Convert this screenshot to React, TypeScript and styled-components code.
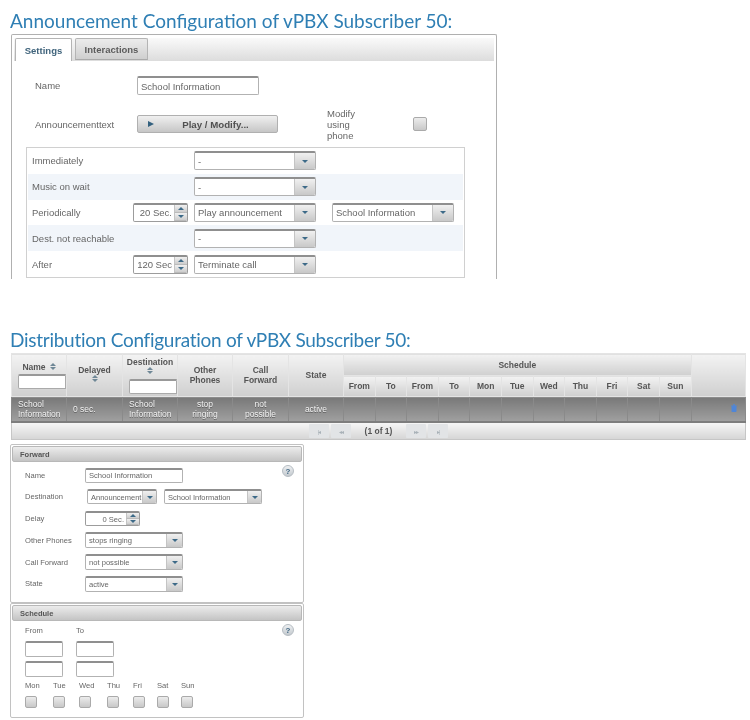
import React from 'react'
import styled, { createGlobalStyle } from 'styled-components'

const variables = {
  title: '#2f7fb4',
  text: '#666',
  strong: '#555'
}

const GlobalStyle = createGlobalStyle`
  body {
    margin: 0;
    background: #fff;
    font-family: "Liberation Sans", Arial, sans-serif;
    color: ${variables.text};
  }
`
const Page = styled.div`
  width: 750px;
  height: 720px;
  overflow: hidden;
  padding: 9px 0 0 10px;
  box-sizing: border-box;
  filter: blur(0.5px);
`
const Title = styled.h1<{ $top?: number; $spacing?: number }>`
  margin: ${p => p.$top ?? 0}px 0 0 0;
  height: 23px;
  line-height: 23px;
  font-family: Lato, sans-serif;
  font-size: 19px;
  font-weight: 400;
  letter-spacing: ${p => p.$spacing ?? 0}px;
  white-space: nowrap;
  color: ${variables.title};
`
const ConfigPanel = styled.section`
  width: 486px;
  height: 245px;
  margin: 2px 0 0 1px;
  padding: 3px 2px 0;
  box-sizing: border-box;
  border: 1px solid #b0b0b0;
  border-bottom: 0;
  border-radius: 2px 2px 0 0;
`
const TabBar = styled.div`
  display: flex;
  gap: 3px;
  height: 23px;
  padding-left: 1px;
  box-sizing: border-box;
  background: linear-gradient(#fafafa, #dcdcdc);
`
const Tab = styled.div<{ $active?: boolean }>`
  display: flex;
  align-items: center;
  justify-content: center;
  width: ${p => (p.$active ? 57 : 73)}px;
  height: ${p => (p.$active ? 23 : 22)}px;
  box-sizing: border-box;
  border: 1px solid #b4b4b4;
  border-bottom: ${p => (p.$active ? 0 : '1px solid #aaa')};
  border-radius: 2px 2px 0 0;
  background: ${p => (p.$active ? '#fff' : 'linear-gradient(#ececec, #cfcfcf)')};
  font-size: 9.5px;
  font-weight: 700;
  color: ${p => (p.$active ? '#40647c' : '#5c5c5c')};
`
const FormRow = styled.div<{ $height: number }>`
  display: flex;
  align-items: center;
  height: ${p => p.$height}px;
  padding-left: 21px;
  font-size: 9.5px;
`
const RowLabel = styled.span`
  width: 102px;
  flex: none;
`
const PhoneLabel = styled.span`
  width: 40px;
  margin: 0 46px 0 49px;
  line-height: 11px;
`
const TextInput = styled.div<{ $width: number; $height: number; $size?: number }>`
  display: flex;
  align-items: center;
  width: ${p => p.$width}px;
  height: ${p => p.$height}px;
  padding: 0 3px;
  box-sizing: border-box;
  flex: none;
  border: 1px solid #b2b2b2;
  border-top: 2px solid #8f8f8f;
  border-radius: 2px;
  background: #fff;
  font-size: ${p => p.$size ?? 9.5}px;
  white-space: nowrap;
  overflow: hidden;
`
const PlayButton = styled.div`
  display: flex;
  align-items: center;
  width: 141px;
  height: 18px;
  padding-left: 10px;
  box-sizing: border-box;
  border: 1px solid #b0b0b0;
  border-radius: 2px;
  background: linear-gradient(#f0f0f0, #c6c6c6);
  font-size: 9.7px;
  font-weight: 700;
  color: #505050;
`
const PlayText = styled.span`
  flex: 1;
  text-align: center;
`
const Triangle = styled.span<{ $size?: number; $up?: boolean; $color?: string }>`
  width: 0;
  height: 0;
  flex: none;
  border-left: ${p => p.$size ?? 3}px solid transparent;
  border-right: ${p => p.$size ?? 3}px solid transparent;
  ${p => (p.$up ? 'border-bottom' : 'border-top')}: ${p => p.$size ?? 3}px solid ${p => p.$color ?? '#3d6a88'};
`
const PlayMark = styled.span`
  width: 0;
  height: 0;
  border-top: 3px solid transparent;
  border-bottom: 3px solid transparent;
  border-left: 6px solid #34617f;
`
const CheckBox = styled.span<{ $size?: number }>`
  display: block;
  width: ${p => p.$size ?? 14}px;
  height: ${p => p.$size ?? 14}px;
  box-sizing: border-box;
  flex: none;
  border: 1px solid #aaa;
  border-radius: 2px;
  background: linear-gradient(#ececec, #c8c8c8);
`
const RuleTable = styled.div`
  width: 439px;
  height: 131px;
  margin: 9px 0 0 12px;
  padding: 0 1px;
  box-sizing: border-box;
  border: 1px solid #d0d0d0;
`
const RuleRow = styled.div<{ $shaded?: boolean }>`
  display: grid;
  grid-template-columns: 101px 61px 138px 1fr;
  align-items: center;
  height: 25.8px;
  padding-left: 4px;
  background: ${p => (p.$shaded ? '#f1f5fa' : '#fff')};
  font-size: 9.5px;
`
const SelectBox = styled.div<{ $width: number; $height: number; $size?: number }>`
  display: flex;
  width: ${p => p.$width}px;
  height: ${p => p.$height}px;
  box-sizing: border-box;
  flex: none;
  border: 1px solid #b2b2b2;
  border-top: 2px solid #8f8f8f;
  border-radius: 2px;
  background: #fff;
  font-size: ${p => p.$size ?? 9.5}px;
  overflow: hidden;
`
const SelectValue = styled.span`
  flex: 1;
  min-width: 0;
  align-self: center;
  padding-left: 3px;
  white-space: nowrap;
  overflow: hidden;
`
const SelectArrow = styled.span<{ $width: number }>`
  display: flex;
  align-items: center;
  justify-content: center;
  width: ${p => p.$width}px;
  flex: none;
  border-left: 1px solid #c4c4c4;
  background: linear-gradient(#f0f0f0, #c8c8c8);
`
const SpinnerBox = styled.div<{ $width: number; $height: number; $size?: number }>`
  display: flex;
  width: ${p => p.$width}px;
  height: ${p => p.$height}px;
  box-sizing: border-box;
  border: 1px solid #9c9c9c;
  border-top: 2px solid #8f8f8f;
  border-radius: 2px;
  background: #fff;
  font-size: ${p => p.$size ?? 9.5}px;
  overflow: hidden;
`
const SpinnerValue = styled.span`
  flex: 1;
  align-self: center;
  text-align: right;
  padding-right: 2px;
  white-space: nowrap;
`
const SpinnerButtons = styled.span`
  display: flex;
  flex-direction: column;
  width: 13px;
  flex: none;
`
const SpinnerButton = styled.span`
  display: flex;
  flex: 1;
  align-items: center;
  justify-content: center;
  border-left: 1px solid #c4c4c4;
  border-bottom: 1px solid #bbb;
  background: linear-gradient(#f0f0f0, #cdcdcd);
`
const GridTable = styled.table`
  width: 735px;
  height: 86px;
  margin: 2px 0 0 1px;
  table-layout: fixed;
  border-collapse: collapse;
  border: 1px solid #c6c6c6;
  font-size: 8.5px;
`
const HeadCell = styled.th<{ $sub?: boolean }>`
  height: ${p => (p.$sub ? 20 : 21)}px;
  padding: 0;
  border: 1px solid #e4e4e4;
  background: linear-gradient(#f3f3f3, #cfcfcf);
  font-weight: 700;
  line-height: 10px;
  color: ${variables.strong};
  overflow: hidden;
`
const HeadTop = styled.div`
  display: flex;
  align-items: center;
  justify-content: center;
  gap: 4px;
  white-space: nowrap;
`
const FilterInput = styled.div`
  width: 48px;
  height: 15px;
  margin: 2px 0 0 6px;
  box-sizing: border-box;
  border: 1px solid #aaa;
  border-top: 2px solid #999;
  border-radius: 2px 0 0 2px;
  background: #fff;
`
const SortMark = styled.span`
  display: inline-flex;
  flex-direction: column;
  gap: 1px;
  align-items: center;
  vertical-align: top;
`
const DataCell = styled.td<{ $left?: boolean }>`
  height: 24px;
  padding: ${p => (p.$left ? '0 2px 0 6px' : '0 3px')};
  border: 1px solid #8a8a8a;
  border-bottom: 2px solid #7d7d7d;
  background: linear-gradient(#787878, #a0a0a0);
  color: #f2f2f2;
  line-height: 10px;
  text-align: ${p => (p.$left ? 'left' : 'center')};
  text-shadow: 0 1px 0 #5d5d5d;
`
const TrashCell = styled(DataCell)`
  text-align: right;
  padding-right: 8px;
`
const PagerCell = styled.td`
  height: 16px;
  padding: 0;
  background: linear-gradient(#f6f6f6, #d6d6d6);
`
const Pager = styled.div`
  display: flex;
  align-items: center;
  justify-content: center;
  gap: 2px;
  font-size: 8.5px;
  font-weight: 700;
  color: ${variables.strong};
`
const PagerButton = styled.span`
  display: flex;
  align-items: center;
  justify-content: center;
  width: 20px;
  height: 14px;
  border-radius: 1px;
  background: #e2e4e6;
  font-size: 6px;
  font-weight: 400;
  letter-spacing: -1px;
  color: #a9b2b8;
`
const PagerText = styled.span`
  width: 51px;
  text-align: center;
`
const SidePanel = styled.section<{ $height: number; $top: number }>`
  position: relative;
  width: 294px;
  height: ${p => p.$height}px;
  margin-top: ${p => p.$top}px;
  padding: 1px;
  box-sizing: border-box;
  border: 1px solid #c2c2c2;
  border-radius: 2px;
`
const SideHeader = styled.header`
  display: flex;
  align-items: center;
  height: 16px;
  padding-left: 7px;
  box-sizing: border-box;
  border: 1px solid #b8b8b8;
  border-radius: 2px;
  background: linear-gradient(#ececec, #c4c4c4);
  font-size: 7.5px;
  font-weight: 700;
  color: ${variables.strong};
`
const HelpIcon = styled.span`
  position: absolute;
  top: 20px;
  right: 9px;
  display: flex;
  align-items: center;
  justify-content: center;
  width: 12px;
  height: 12px;
  border: 1px solid #b5bcc2;
  border-radius: 50%;
  box-sizing: border-box;
  background: linear-gradient(#eef0f2, #c3c9ce);
  font-size: 8px;
  font-weight: 700;
  color: #3d6582;
`
const SideForm = styled.div`
  display: flex;
  flex-direction: column;
  gap: 5.8px;
  padding: 5px 0 0 13px;
  font-size: 7.6px;
`
const SideRow = styled.div`
  display: flex;
  align-items: center;
  height: 16px;
`
const SideLabel = styled.span`
  width: 60px;
  flex: none;
`
const SideControls = styled.div`
  display: flex;
  gap: 7px;
  margin-left: 2px;
`
const ScheduleBody = styled.div`
  display: flex;
  flex-direction: column;
  padding: 5px 0 0 13px;
  font-size: 7.6px;
`
const TimeGrid = styled.div`
  display: grid;
  grid-template-columns: 38px 38px;
  column-gap: 13px;
  row-gap: 4px;
  justify-content: start;
  align-items: start;
`
const TimeHead = styled.span`
  height: 11px;
  line-height: 10px;
`
const DayGrid = styled.div`
  display: grid;
  grid-template-columns: 28px 26px 28px 26px 24px 24px 24px;
  row-gap: 6px;
  margin-top: 4px;
  line-height: 9px;
`

const sortIcon = (
  <SortMark>
    <Triangle $size={3} $up $color="#6f8796" />
    <Triangle $size={3} $color="#6f8796" />
  </SortMark>
)

const Select = ({ value, width, height, size, arrow = 20 }: { value: string; width: number; height: number; size?: number; arrow?: number }) => (
  <SelectBox $width={width} $height={height} $size={size}>
    <SelectValue>{value}</SelectValue>
    <SelectArrow $width={arrow}><Triangle /></SelectArrow>
  </SelectBox>
)

const Spinner = ({ value, width, height, size }: { value: string; width: number; height: number; size?: number }) => (
  <SpinnerBox $width={width} $height={height} $size={size}>
    <SpinnerValue>{value}</SpinnerValue>
    <SpinnerButtons>
      <SpinnerButton><Triangle $up /></SpinnerButton>
      <SpinnerButton><Triangle /></SpinnerButton>
    </SpinnerButtons>
  </SpinnerBox>
)

const days = ['Mon', 'Tue', 'Wed', 'Thu', 'Fri', 'Sat', 'Sun']
const slots = ['From', 'To', 'From', 'To', ...days]

const App = () => (
  <Page>
    <GlobalStyle />
    <Title>Announcement Configuration of vPBX Subscriber 50:</Title>
    <ConfigPanel>
      <TabBar>
        <Tab $active>Settings</Tab>
        <Tab>Interactions</Tab>
      </TabBar>
      <FormRow $height={49}>
        <RowLabel>Name</RowLabel>
        <TextInput $width={122} $height={19}>School Information</TextInput>
      </FormRow>
      <FormRow $height={28}>
        <RowLabel>Announcementtext</RowLabel>
        <PlayButton><PlayMark /><PlayText>Play / Modify...</PlayText></PlayButton>
        <PhoneLabel>Modify using phone</PhoneLabel>
        <CheckBox />
      </FormRow>
      <RuleTable>
        <RuleRow>
          <span>Immediately</span><span />
          <Select value="-" width={122} height={19} />
        </RuleRow>
        <RuleRow $shaded>
          <span>Music on wait</span><span />
          <Select value="-" width={122} height={19} />
        </RuleRow>
        <RuleRow>
          <span>Periodically</span>
          <Spinner value="20 Sec." width={55} height={19} />
          <Select value="Play announcement" width={122} height={19} />
          <Select value="School Information" width={122} height={19} />
        </RuleRow>
        <RuleRow $shaded>
          <span>Dest. not reachable</span><span />
          <Select value="-" width={122} height={19} />
        </RuleRow>
        <RuleRow>
          <span>After</span>
          <Spinner value="120 Sec" width={55} height={19} />
          <Select value="Terminate call" width={122} height={19} />
        </RuleRow>
      </RuleTable>
    </ConfigPanel>

    <Title $top={49} $spacing={-0.27}>Distribution Configuration of vPBX Subscriber 50:</Title>
    <GridTable>
      <colgroup>
        <col width={55} /><col width={56} /><col width={55} /><col width={55} /><col width={56} /><col width={55} />
        {slots.map((slot, i) => <col key={slot + i} width={31.6} />)}
        <col />
      </colgroup>
      <thead>
        <tr>
          <HeadCell rowSpan={2}>
            <HeadTop>Name {sortIcon}</HeadTop>
            <FilterInput />
          </HeadCell>
          <HeadCell rowSpan={2}>Delayed<br />{sortIcon}</HeadCell>
          <HeadCell rowSpan={2}>
            Destination<br />{sortIcon}
            <FilterInput />
          </HeadCell>
          <HeadCell rowSpan={2}>Other<br />Phones</HeadCell>
          <HeadCell rowSpan={2}>Call<br />Forward</HeadCell>
          <HeadCell rowSpan={2}>State</HeadCell>
          <HeadCell colSpan={11}>Schedule</HeadCell>
          <HeadCell rowSpan={2} />
        </tr>
        <tr>
          {slots.map((slot, i) => <HeadCell key={slot + i} $sub>{slot}</HeadCell>)}
        </tr>
      </thead>
      <tbody>
        <tr>
          <DataCell $left>School Information</DataCell>
          <DataCell $left>0 sec.</DataCell>
          <DataCell $left>School Information</DataCell>
          <DataCell>stop<br />ringing</DataCell>
          <DataCell>not<br />possible</DataCell>
          <DataCell>active</DataCell>
          {slots.map((slot, i) => <DataCell key={slot + i} />)}
          <TrashCell>
            <svg width="6" height="8" viewBox="0 0 6 8"><path d="M0 1.5h6V2H5.5v5.2q0 .8-.8.8H1.3q-.8 0-.8-.8V2H0zM2 .3h2v1H2z" fill="#4f86d8" /></svg>
          </TrashCell>
        </tr>
        <tr>
          <PagerCell colSpan={18}>
            <Pager>
              <PagerButton>|◂</PagerButton>
              <PagerButton>◂◂</PagerButton>
              <PagerText>(1 of 1)</PagerText>
              <PagerButton>▸▸</PagerButton>
              <PagerButton>▸|</PagerButton>
            </Pager>
          </PagerCell>
        </tr>
      </tbody>
    </GridTable>

    <SidePanel $height={159} $top={4}>
      <SideHeader>Forward</SideHeader>
      <HelpIcon>?</HelpIcon>
      <SideForm>
        <SideRow>
          <SideLabel>Name</SideLabel>
          <TextInput $width={98} $height={15} $size={7.6}>School Information</TextInput>
        </SideRow>
        <SideRow>
          <SideLabel>Destination</SideLabel>
          <SideControls>
            <Select value="Announcement" width={70} height={15} size={7.5} arrow={13} />
            <Select value="School Information" width={98} height={15} size={7.5} arrow={13} />
          </SideControls>
        </SideRow>
        <SideRow>
          <SideLabel>Delay</SideLabel>
          <Spinner value="0 Sec." width={55} height={15} size={7.6} />
        </SideRow>
        <SideRow>
          <SideLabel>Other Phones</SideLabel>
          <Select value="stops ringing" width={98} height={16} size={7.6} arrow={15} />
        </SideRow>
        <SideRow>
          <SideLabel>Call Forward</SideLabel>
          <Select value="not possible" width={98} height={16} size={7.6} arrow={15} />
        </SideRow>
        <SideRow>
          <SideLabel>State</SideLabel>
          <Select value="active" width={98} height={16} size={7.6} arrow={15} />
        </SideRow>
      </SideForm>
    </SidePanel>

    <SidePanel $height={115} $top={0}>
      <SideHeader>Schedule</SideHeader>
      <HelpIcon>?</HelpIcon>
      <ScheduleBody>
        <TimeGrid>
          <TimeHead>From</TimeHead><TimeHead>To</TimeHead>
          <TextInput $width={38} $height={16} />
          <TextInput $width={38} $height={16} />
          <TextInput $width={38} $height={16} />
          <TextInput $width={38} $height={16} />
        </TimeGrid>
        <DayGrid>
          {days.map(day => <span key={day}>{day}</span>)}
          {days.map(day => <CheckBox key={day} $size={12} />)}
        </DayGrid>
      </ScheduleBody>
    </SidePanel>
  </Page>
)

export default App
